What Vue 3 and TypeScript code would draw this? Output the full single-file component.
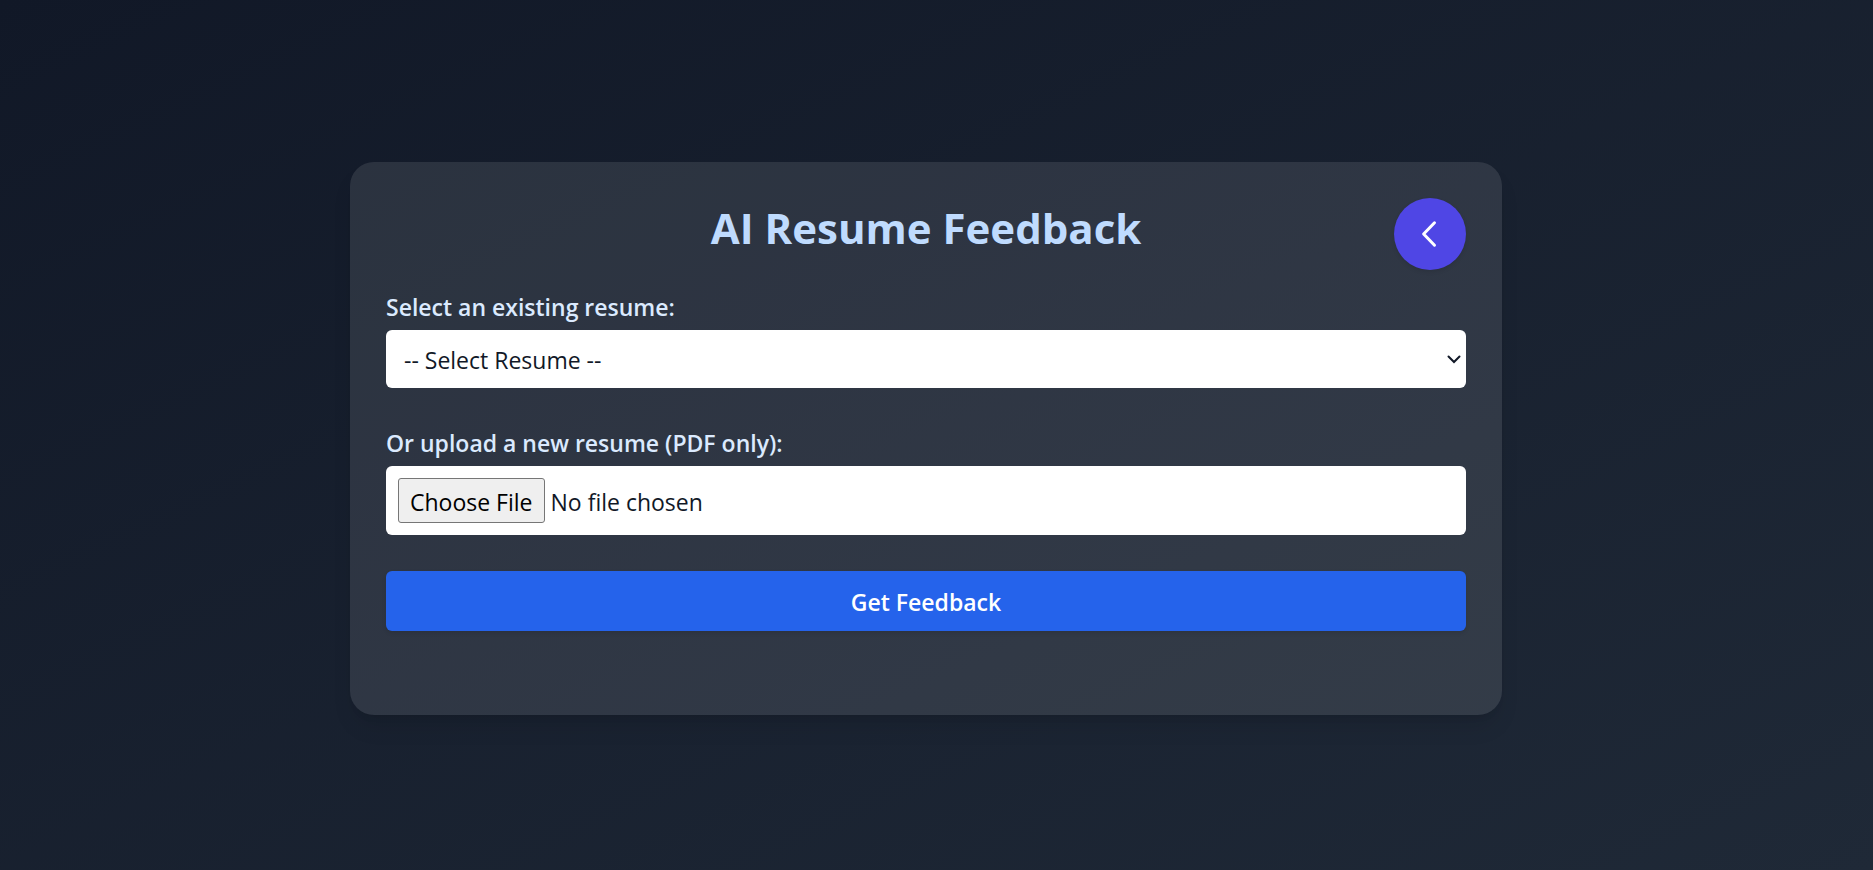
<script setup lang="ts">
import { ref } from 'vue'

const resume = ref('')
</script>

<template>
  <main class="page">
    <section class="card">
      <h1>AI Resume Feedback</h1>
      <button class="back" type="button" aria-label="Go back">
        <svg viewBox="0 0 24 24" fill="none" stroke="currentColor" stroke-width="2" stroke-linecap="round" stroke-linejoin="round" aria-hidden="true">
          <path d="M15 19.5 7.75 12 15 4.5" />
        </svg>
      </button>
      <form @submit.prevent>
        <div class="field">
          <label for="resume">Select an existing resume:</label>
          <div class="select-wrap">
            <select id="resume" v-model="resume">
              <option value="">-- Select Resume --</option>
            </select>
            <svg class="arrow" viewBox="0 0 16 10" fill="none" stroke="currentColor" stroke-width="2" stroke-linecap="round" aria-hidden="true">
              <path d="M2.5 2.5 8 8 13.5 2.5" />
            </svg>
          </div>
        </div>
        <div class="field">
          <label for="upload">Or upload a new resume (PDF only):</label>
          <input id="upload" type="file" accept="application/pdf" />
        </div>
        <button class="submit" type="submit">Get Feedback</button>
      </form>
    </section>
  </main>
</template>

<style>
body {
  margin: 0;
}
</style>

<style scoped>
.page {
  box-sizing: border-box;
  min-height: 100vh;
  display: flex;
  align-items: center;
  justify-content: center;
  padding: 43px 57px 36px 36px;
  background: linear-gradient(to bottom right, #111827, #1f2937);
  color: #fff;
  font-family: "Segoe UI", "Open Sans", "Noto Sans", sans-serif;
  font-size: 23px;
  line-height: 36px;
}

.card {
  position: relative;
  box-sizing: border-box;
  width: 100%;
  max-width: 1152px;
  padding: 36px 36px 84px;
  border-radius: 24px;
  background: rgba(255, 255, 255, 0.1);
  box-shadow: 0 15px 23px -5px rgba(0, 0, 0, 0.1), 0 6px 9px -6px rgba(0, 0, 0, 0.1);
}

h1 {
  margin: 0 0 30px;
  color: #bfdbfe;
  font-size: 42px;
  font-weight: 700;
  line-height: 60px;
  text-align: center;
}

.back {
  position: absolute;
  top: 36px;
  right: 36px;
  width: 72px;
  height: 72px;
  display: flex;
  align-items: center;
  justify-content: center;
  padding: 0;
  border: 0;
  border-radius: 50%;
  background: #4f46e5;
  color: #fff;
  box-shadow: 0 2px 4px rgba(0, 0, 0, 0.1);
  cursor: pointer;
}

.back svg {
  width: 36px;
  height: 36px;
}

form {
  display: flex;
  flex-direction: column;
  gap: 36px;
}

.field {
  display: flex;
  flex-direction: column;
  gap: 4px;
}

label {
  color: #dbeafe;
  font-weight: 600;
  line-height: 38px;
}

.select-wrap {
  position: relative;
}

select,
input {
  display: block;
  box-sizing: border-box;
  width: 100%;
  border: 0;
  border-radius: 6px;
  background: #fff;
  color: #111827;
  font: inherit;
}

select {
  appearance: none;
  height: 58px;
  padding: 2px 42px 0 18px;
}

.arrow {
  position: absolute;
  top: 24px;
  right: 4px;
  width: 16px;
  height: 10px;
  color: #111827;
  pointer-events: none;
}

input {
  padding: 12px;
}

input::file-selector-button {
  box-sizing: border-box;
  height: 45px;
  margin: 0 6px 0 0;
  padding: 2px 11px 0;
  border: 1px solid #767676;
  border-radius: 3px;
  background: #efefef;
  color: #000;
  font: inherit;
}

.submit {
  padding: 13px 24px 11px;
  border: 0;
  border-radius: 6px;
  background: #2563eb;
  color: #fff;
  font: inherit;
  font-weight: 600;
  box-shadow: 0 2px 4px rgba(0, 0, 0, 0.1);
  cursor: pointer;
}
</style>
